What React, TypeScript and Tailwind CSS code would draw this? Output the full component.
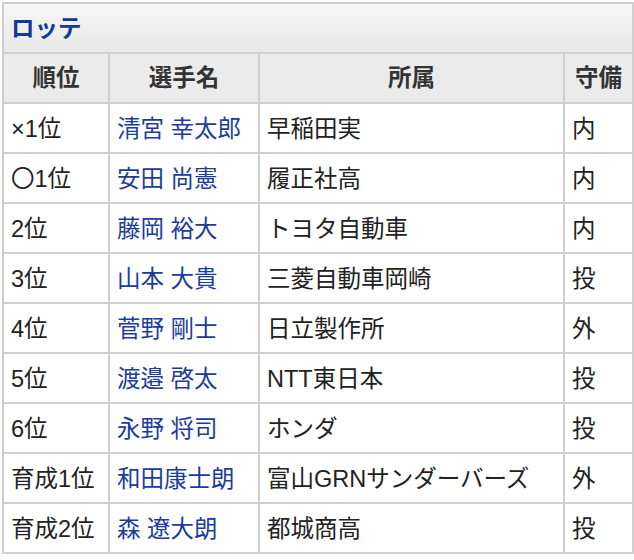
const rows: [string, string, string, string][] = [
  ["×1位", "清宮 幸太郎", "早稲田実", "内"],
  ["〇1位", "安田 尚憲", "履正社高", "内"],
  ["2位", "藤岡 裕大", "トヨタ自動車", "内"],
  ["3位", "山本 大貴", "三菱自動車岡崎", "投"],
  ["4位", "菅野 剛士", "日立製作所", "外"],
  ["5位", "渡邉 啓太", "NTT東日本", "投"],
  ["6位", "永野 将司", "ホンダ", "投"],
  ["育成1位", "和田康士朗", "富山GRNサンダーバーズ", "外"],
  ["育成2位", "森 遼大朗", "都城商高", "投"],
];

export default function App() {
  return (
    <div
      className="w-[634px] h-[560px] bg-white pt-[2px] pl-[2px]"
      style={{ fontFamily: '"Liberation Sans", "Noto Sans CJK JP", sans-serif' }}
    >
      <table className="border-collapse text-[23.5px] leading-none text-[#222] w-[630px] table-fixed">
        <colgroup>
          <col className="w-[106px]" />
          <col className="w-[150px]" />
          <col className="w-[305px]" />
          <col className="w-[69px]" />
        </colgroup>
        <thead>
          <tr className="h-[50px]">
            <th
              colSpan={4}
              className="border-2 border-[#cfcfcf] bg-gradient-to-b from-[#f7f7f7] to-[#e8e8e8] text-left px-[7px] pt-[3px] font-bold text-[#14389c]"
            >
              ロッテ
            </th>
          </tr>
          <tr className="h-[50px]">
            {["順位", "選手名", "所属", "守備"].map((h) => (
              <th key={h} className="border-2 border-[#cfcfcf] bg-[#ebebeb] font-bold text-center px-[4px] pt-[2px] text-[#333]">
                {h}
              </th>
            ))}
          </tr>
        </thead>
        <tbody>
          {rows.map((r) => (
            <tr key={r[0]} className="h-[50px]">
              <td className="border-2 border-[#cfcfcf] px-[7px] pt-[3px] whitespace-nowrap">{r[0]}</td>
              <td className="border-2 border-[#cfcfcf] px-[7px] pt-[3px] whitespace-nowrap">
                <a className="text-[#1b3c9e]">{r[1]}</a>
              </td>
              <td className="border-2 border-[#cfcfcf] px-[7px] pt-[3px] whitespace-nowrap">{r[2]}</td>
              <td className="border-2 border-[#cfcfcf] px-[7px] pt-[3px] whitespace-nowrap">{r[3]}</td>
            </tr>
          ))}
        </tbody>
      </table>
    </div>
  );
}
